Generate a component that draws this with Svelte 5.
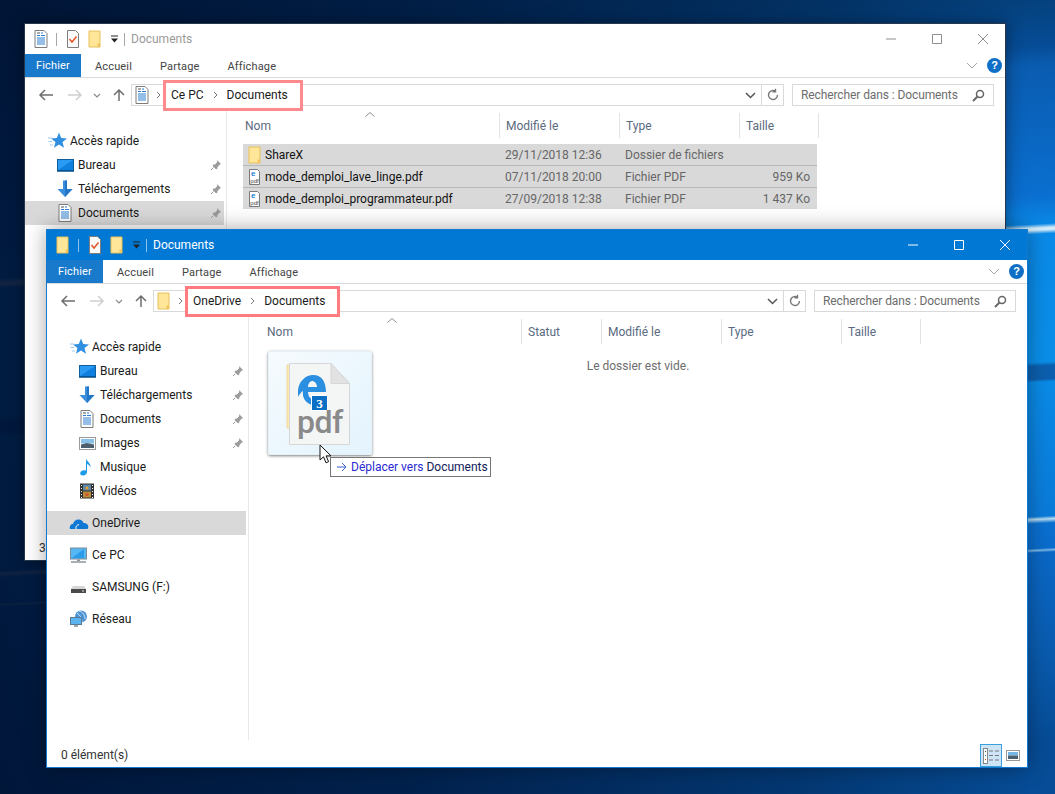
<script lang="ts">
  type NavItem = { label: string; icon: string; level: number; pin?: boolean; selected?: boolean; gap?: boolean };

  const quickAccess = (current: string): NavItem[] => [
    { label: 'Accès rapide', icon: 'star', level: 0 },
    { label: 'Bureau', icon: 'desktop', level: 1, pin: true },
    { label: 'Téléchargements', icon: 'download', level: 1, pin: true },
    { label: 'Documents', icon: 'doc', level: 1, pin: true, selected: current === 'Documents' }
  ];

  const backNav: NavItem[] = quickAccess('Documents');

  const frontNav: NavItem[] = [
    ...quickAccess(''),
    { label: 'Images', icon: 'images', level: 1, pin: true },
    { label: 'Musique', icon: 'music', level: 1 },
    { label: 'Vidéos', icon: 'video', level: 1 },
    { label: 'OneDrive', icon: 'cloud', level: 0, selected: true, gap: true },
    { label: 'Ce PC', icon: 'pc', level: 0, gap: true },
    { label: 'SAMSUNG (F:)', icon: 'drive', level: 0, gap: true },
    { label: 'Réseau', icon: 'network', level: 0, gap: true }
  ];

  const backCols = [
    { label: 'Nom', width: 261 },
    { label: 'Modifié le', width: 120 },
    { label: 'Type', width: 120 },
    { label: 'Taille', width: 79 }
  ];

  const frontCols = [
    { label: 'Nom', width: 261 },
    { label: 'Statut', width: 80 },
    { label: 'Modifié le', width: 120 },
    { label: 'Type', width: 120 },
    { label: 'Taille', width: 79 }
  ];

  const files = [
    { name: 'ShareX', icon: 'folder', date: '29/11/2018 12:36', type: 'Dossier de fichiers', size: '' },
    { name: 'mode_demploi_lave_linge.pdf', icon: 'pdf', date: '07/11/2018 20:00', type: 'Fichier PDF', size: '959 Ko' },
    { name: 'mode_demploi_programmateur.pdf', icon: 'pdf', date: '27/09/2018 12:38', type: 'Fichier PDF', size: '1 437 Ko' }
  ];
</script>

{#snippet icon(name: string)}
  <svg class="ico" width="20" height="20" viewBox="0 0 20 20">
    {#if name === 'folder'}
      <path d="M4 2h11v16H4z" fill="#ffe698" stroke="#e8c05a"/>
      <path d="M12.500 14.500H15V18h-2.500z" fill="#f2c55c"/>
    {:else if name === 'doc'}
      <path d="M4 1.500h9l3 3v14H4z" fill="#fff" stroke="#7d7d7d"/>
      <path d="M10 4h2M6 6.500h3M10 6.500h4M6 9h8M6 11h8M6 13h8M6 15h8" stroke="#2b7cd3" fill="none"/>
      <path d="M6 4h3" stroke="#555"/>
    {:else if name === 'check'}
      <path d="M4.500 1.500h8l3 3v14h-11z" fill="#fafafa" stroke="#7d7d7d"/>
      <path d="M6.500 10l2.500 3 4.500-5.500" stroke="#e2562a" stroke-width="1.500" fill="none"/>
    {:else if name === 'desktop'}
      <rect x="2.500" y="4.500" width="16" height="11" fill="#2b9af3" stroke="#0f5f9f"/>
      <path d="M3 15l15-10v10z" fill="#0f7fe0"/>
      <path d="M2 16h17" stroke="#06508e" stroke-width="1.500"/>
    {:else if name === 'download'}
      <path d="M8 1.500h4V10h5.500L10 18 2.500 10H8z" fill="#3a8fdc"/>
      <path d="M10 1.500h2V10h5.500L10 18z" fill="#2276c6"/>
    {:else if name === 'star'}
      <path d="M12 1.500l2.200 5.600 5.800.3-4.500 3.600 1.500 5.700-5-3.200-5 3.200 1.500-5.700L4 7.400l5.800-.3z" fill="#2f8fe0"/>
      <path d="M1 7h4M1.500 10.500h3.500M3 14h3" stroke="#9ccbf0"/>
    {:else if name === 'images'}
      <rect x="2.500" y="4.500" width="16" height="12" fill="#fff" stroke="#9a9a9a"/>
      <rect x="4" y="6" width="13" height="4.500" fill="#86bfe8"/>
      <path d="M4 11.500l6-1.500 7 1.500V15H4z" fill="#4c5d6c"/>
    {:else if name === 'music'}
      <path d="M9 1.500c.5 3 5 4 4.500 9-.6-2-2-3-3.500-3.500V15c0 2-2 3.500-4 3.500-1.800 0-2.800-1-2.800-2.300 0-1.800 2-3 4-3 .7 0 1.200.1 1.800.3z" fill="#1e9be8"/>
    {:else if name === 'video'}
      <rect x="3" y="2.500" width="14" height="15" fill="#333"/>
      <path d="M4 4h1v1H4zM4 7h1v1H4zM4 10h1v1H4zM4 13h1v1H4zM4 16h1v1H4zM15 4h1v1h-1zM15 7h1v1h-1zM15 10h1v1h-1zM15 13h1v1h-1zM15 16h1v1h-1z" fill="#eee"/>
      <rect x="6" y="3.500" width="8" height="6" fill="#5d88a8"/>
      <rect x="6" y="10.500" width="8" height="6" fill="#b98a3c"/>
      <circle cx="10" cy="7" r="1.600" fill="#e8a02a"/>
      <circle cx="10" cy="13.500" r="1.600" fill="#d2552a"/>
    {:else if name === 'cloud'}
      <path d="M1 16c-.8-3 1-5 3-5 .8-3.500 3.500-5 6.500-4.500 2 .4 3.500 1.800 4 3.500 2.800-.3 5 1.700 4.800 4.200-.1 1-.6 1.800-1.300 1.800z" fill="#0f78d4"/>
      <path d="M7 16c-.6-2.500 1-4.300 3-4.300" stroke="#fff" fill="none"/>
    {:else if name === 'pc'}
      <rect x="1.500" y="3" width="16" height="11" fill="#55b8f5" stroke="#7d8b95"/>
      <path d="M3 13L15 4v9z" fill="#2c9bea"/>
      <path d="M8 14.500h3v1.500H8z" fill="#8a949c"/>
      <path d="M2 17h15" stroke="#8a949c" stroke-width="1.500"/>
    {:else if name === 'drive'}
      <path d="M4 9h11l2 3H2z" fill="#d5d5d5"/>
      <rect x="2" y="12" width="15" height="4" fill="#4a4a4a"/>
      <path d="M13 14h2" stroke="#ddd"/>
    {:else if name === 'network'}
      <circle cx="12" cy="7.500" r="6" fill="#4d93d6"/>
      <path d="M8 4c3 2 5 5 5 9M10 2c4 1 6 4 6 8" stroke="#cfe5f6" fill="none"/>
      <rect x="1.500" y="8.500" width="11" height="7" fill="#5cb4ee" stroke="#5a7a94"/>
      <path d="M5 17h4" stroke="#7d8b95" stroke-width="1.500"/>
    {:else if name === 'pdf'}
      <path d="M4.500 2.500h8l2 2v13h-10z" fill="#fff" stroke="#7a7a7a"/>
      <text x="6" y="9" class="tiny-e">e</text>
      <text x="9.500" y="15.500" text-anchor="middle" class="tiny">pdf</text>
    {/if}
  </svg>
{/snippet}

{#snippet pin()}
  <svg class="pin" width="12" height="12" viewBox="0 0 12 12">
    <path d="M7 1l4 4-1.200.6-2.300 2.300-.4 2-1.100.3-3.300-3.300.3-1.100 2-.4 2.300-2.300z" fill="#9a9a9a"/>
    <path d="M3.500 8.500L1 11" stroke="#9a9a9a"/>
  </svg>
{/snippet}

{#snippet nav(items: NavItem[])}
  <nav class="sidebar">
    {#each items as item}
      <div class="nav-row" class:selected={item.selected} class:gap={item.gap} class:sub={item.level === 1}>
        {@render icon(item.icon)}
        <span class="nav-label">{item.label}</span>
        {#if item.pin}{@render pin()}{/if}
      </div>
    {/each}
  </nav>
{/snippet}

{#snippet header(cols: { label: string; width: number }[])}
  <div class="col-head">
    <svg class="sort" width="10" height="5" viewBox="0 0 10 5"><path d="M.5 4.500L5 .5l4.500 4" fill="none" stroke="#8a8a8a"/></svg>
    {#each cols as col}
      <div class="col" style="width: {col.width}px">{col.label}</div>
    {/each}
  </div>
{/snippet}

{#snippet chrome(active: boolean, qatFirst: string, crumbs: string[], addrIcon: string)}
  <header class="titlebar" class:active>
    <div class="qat">
      {@render icon(qatFirst)}
      <i class="qat-sep"></i>
      {@render icon('check')}
      {@render icon('folder')}
      <svg class="qat-drop" width="9" height="8" viewBox="0 0 9 8"><path d="M1 1h7" stroke="currentColor"/><path d="M1 3.500h7L4.500 7.500z" fill="currentColor"/></svg>
      <i class="qat-sep last"></i>
    </div>
    <span class="title">Documents</span>
    <div class="caption">
      <svg width="12" height="12" viewBox="0 0 12 12"><path d="M1 6h10" stroke="currentColor" fill="none"/></svg>
      <svg width="12" height="12" viewBox="0 0 12 12"><path d="M1.500 1.500h9v9h-9z" stroke="currentColor" fill="none"/></svg>
      <svg width="12" height="12" viewBox="0 0 12 12"><path d="M1 1l10 10M11 1L1 11" stroke="currentColor" fill="none"/></svg>
    </div>
  </header>

  <div class="tabs">
    <div class="tab file">Fichier</div>
    <div class="tab">Accueil</div>
    <div class="tab">Partage</div>
    <div class="tab">Affichage</div>
    <svg class="collapse" width="12" height="7" viewBox="0 0 12 7"><path d="M1 1l5 5 5-5" fill="none" stroke="#a8a8a8"/></svg>
    <div class="help">?</div>
  </div>

  <div class="addressbar">
    <svg class="arrow" width="16" height="14" viewBox="0 0 16 14"><path d="M15 7H2M7 2L2 7l5 5" fill="none" stroke="#6e6e6e" stroke-width="1.500"/></svg>
    <svg class="arrow fwd" width="16" height="14" viewBox="0 0 16 14"><path d="M1 7h13M9 2l5 5-5 5" fill="none" stroke="#cfcfcf" stroke-width="1.500"/></svg>
    <svg class="arrow small" width="8" height="5" viewBox="0 0 8 5"><path d="M1 1l3 3 3-3" fill="none" stroke="#8a8a8a" stroke-width="1.200"/></svg>
    <svg class="arrow up" width="14" height="14" viewBox="0 0 14 14"><path d="M7 13V2M2 7l5-5 5 5" fill="none" stroke="#6e6e6e" stroke-width="1.500"/></svg>
    <div class="address">
      {@render icon(addrIcon)}
      <svg class="crumb-sep first" width="5" height="8" viewBox="0 0 5 8"><path d="M1 1l3 3-3 3" fill="none" stroke="#7a7a7a"/></svg>
      <div class="crumbs">
        <span>{crumbs[0]}</span>
        <svg class="crumb-sep" width="5" height="8" viewBox="0 0 5 8"><path d="M1 1l3 3-3 3" fill="none" stroke="#7a7a7a"/></svg>
        <span>{crumbs[1]}</span>
      </div>
      <svg class="addr-drop" width="11" height="7" viewBox="0 0 11 7"><path d="M1 1l4.500 4.500L10 1" fill="none" stroke="#555" stroke-width="1.500"/></svg>
      <div class="refresh">
        <svg width="14" height="14" viewBox="0 0 14 14"><path d="M11.500 7a4.500 4.500 0 1 1-1.800-3.600M9.500 .8v3h-3" fill="none" stroke="#777" stroke-width="1.400"/></svg>
      </div>
    </div>
    <div class="search">
      <span>Rechercher dans : Documents</span>
      <svg width="13" height="13" viewBox="0 0 13 13"><circle cx="8" cy="5" r="3.500" fill="none" stroke="#666" stroke-width="1.500"/><path d="M5.500 7.500L1 12" stroke="#666" stroke-width="2"/></svg>
    </div>
  </div>
{/snippet}

<div class="desktop">
  <section class="window back">
    {@render chrome(false, 'doc', ['Ce PC', 'Documents'], 'doc')}
    <div class="body">
      {@render nav(backNav)}
      <div class="splitter"></div>
      <main class="main">
        {@render header(backCols)}
        <div class="files">
          {#each files as file}
            <div class="file-row">
              {@render icon(file.icon)}
              <span class="f-name">{file.name}</span>
              <span class="f-date">{file.date}</span>
              <span class="f-type">{file.type}</span>
              <span class="f-size">{file.size}</span>
            </div>
          {/each}
        </div>
      </main>
    </div>
    <footer class="status"><span>3 élément(s)</span></footer>
  </section>

  <section class="window front">
    {@render chrome(true, 'folder', ['OneDrive', 'Documents'], 'folder')}
    <div class="body">
      {@render nav(frontNav)}
      <div class="splitter"></div>
      <main class="main">
        {@render header(frontCols)}
        <p class="empty">Le dossier est vide.</p>

        <div class="drag-thumb">
          <svg width="90" height="92" viewBox="0 0 90 92">
            <path d="M12 8h6v63h-6z" fill="#fbe7b2" stroke="#eed9a0"/>
            <path d="M14.500 6.500h41.500l18.500 20v61h-60z" fill="#f4f5f5" stroke="#d6d6d6"/>
            <path d="M56 6.500v20h18.500z" fill="#e2e2e2" stroke="#d6d6d6"/>
            <path transform="translate(23 18)" fill-rule="evenodd" fill="#2a8fe0" d="M0 15C1 6 8 0 15 0c9 0 13 7 13 17H10c0 6 5 9 10 9 3 0 5-1 7-2v5c-4 2-9 2-13 1-7-2-10-8-9-14-2 1-4 4-5 6zM10 12h9c0-4-3-6-5-6s-4 3-4 6z"/>
            <rect x="36.500" y="38.500" width="16" height="15" fill="#0b6fc4" stroke="#fff"/>
            <text x="44.500" y="51" text-anchor="middle" class="badge-num">3</text>
            <text x="45" y="76" text-anchor="middle" class="pdf-word">pdf</text>
          </svg>
        </div>

        <div class="tooltip">
          <svg width="10" height="10" viewBox="0 0 10 10"><path d="M0 5h9M5 1l4 4-4 4" fill="none" stroke="#3a5fd0"/></svg>
          <span class="tip-verb">Déplacer vers</span>
          <span class="tip-target">Documents</span>
        </div>

        <svg class="cursor" width="14" height="20" viewBox="0 0 14 20">
          <path d="M1 1v15l3.500-3.200 2.500 6 2.600-1.100-2.500-5.800H12z" fill="#fff" stroke="#111"/>
        </svg>
      </main>
    </div>
    <footer class="status">
      <span>0 élément(s)</span>
      <div class="views">
        <div class="view on">
          <svg width="16" height="16" viewBox="0 0 16 16">
            <rect x=".5" y=".5" width="4" height="15" fill="#fff" stroke="#888"/>
            <path d="M2 3h1v1H2z" fill="#444"/><path d="M2 7h1v1H2z" fill="#2b7cd3"/><path d="M2 11h1v1H2z" fill="#d9541e"/>
            <path d="M6 3h4M12 3h4M6 7.500h4M12 7.500h4M6 12h4M12 12h4" stroke="#777"/>
          </svg>
        </div>
        <div class="view">
          <svg width="14" height="11" viewBox="0 0 14 11">
            <rect x=".5" y=".5" width="13" height="10" fill="#fff" stroke="#999"/>
            <rect x="2" y="2" width="10" height="3.500" fill="#76b5e8"/>
            <rect x="2" y="5.500" width="10" height="3.500" fill="#4c6070"/>
          </svg>
        </div>
      </div>
    </footer>
  </section>
</div>

<style>
  :global(body) {
    margin: 0;
    font-family: Roboto, "Liberation Sans", sans-serif;
    font-size: 12px;
  }

  .desktop {
    position: relative;
    width: 1055px;
    height: 794px;
    overflow: hidden;
    background:
      linear-gradient(90deg, rgba(0, 18, 50, .92) 0, rgba(0, 22, 58, .8) 400px, rgba(0, 30, 70, .45) 800px, rgba(0, 40, 90, 0) 1030px),
      linear-gradient(177deg,
        #03345f 0,
        #064c96 100px,
        #0a5cb0 120px,
        #0a6fd0 250px,
        #0a88e6 278px,
        #d4ecfa 282px,
        #d4ecfa 284px,
        #0a8ae8 288px,
        #0a8ee8 416px,
        #0c5fae 420px,
        #0c5fae 433px,
        #0a8ae6 436px,
        #0a7ad8 570px,
        #b8dcf2 573px,
        #0a70d0 577px,
        #0a6ccc 602px,
        #7db8e6 604px,
        #0a68c6 606px,
        #0a5cb0 700px,
        #064c96 794px);
  }

  .window {
    position: absolute;
    box-sizing: border-box;
    width: 982px;
    display: flex;
    flex-direction: column;
    background: #fff;
    color: #1a1a1a;
  }

  /* the two explorer windows sit on a free desktop */
  .back {
    left: 24px;
    top: 23px;
    height: 538px;
    border: 1px solid #27384c;
    box-shadow: 0 0 14px rgba(0, 0, 0, .4);
  }

  .front {
    left: 46px;
    top: 229px;
    height: 539px;
    border: 1px solid #1179cf;
    box-shadow: 0 0 20px rgba(0, 0, 0, .35);
  }

  .titlebar {
    height: 30px;
    flex: none;
    display: flex;
    align-items: center;
    color: #9a9a9a;
    background: #fff;
  }

  .titlebar.active {
    color: #fff;
    background: #0078d4;
  }

  .qat {
    display: flex;
    align-items: center;
    flex: none;
    padding-left: 6px;
    gap: 2px;
  }

  .qat-sep {
    flex: none;
    width: 1px;
    height: 13px;
    margin: 0 4px 0 3px;
    background: #a8a8a8;
  }

  .qat-sep.last {
    margin: 0 5px 0 3px;
  }

  .active .qat-sep {
    background: #8fc2ea;
  }

  .qat-drop {
    flex: none;
    color: #222;
    margin-left: 3px;
  }

  .title {
    flex: 1;
    font-size: 12px;
    padding-left: 1px;
  }

  .caption {
    display: flex;
    gap: 34px;
    padding-right: 16px;
    color: #8e8e8e;
  }

  .active .caption {
    color: #fff;
  }

  .tabs {
    height: 24px;
    flex: none;
    display: flex;
    align-items: center;
    box-sizing: border-box;
    border-bottom: 1px solid #dadbdc;
    color: #444;
    font-size: 11px;
    padding-right: 3px;
  }

  .tab {
    padding: 1px 14px 0;
    letter-spacing: .15px;
  }

  .tab.file {
    align-self: stretch;
    display: flex;
    align-items: center;
    width: 56px;
    box-sizing: border-box;
    padding: 0 0 0 11px;
    background: #1979ca;
    color: #fff;
  }

  .collapse {
    margin-left: auto;
    margin-right: 9px;
  }

  .help {
    width: 15px;
    height: 15px;
    border-radius: 50%;
    background: #0f6fc6;
    color: #fff;
    font: bold 11px/15px "Liberation Sans", sans-serif;
    text-align: center;
  }

  .addressbar {
    height: 22px;
    flex: none;
    margin-top: 6px;
    display: flex;
    align-items: center;
    padding-right: 11px;
  }

  .arrow {
    margin-left: 13px;
    flex: none;
  }

  .arrow.small {
    margin-left: 10px;
  }

  .arrow.up {
    margin-left: 11px;
  }

  .address {
    flex: 1;
    height: 22px;
    box-sizing: border-box;
    margin-left: 5px;
    border: 1px solid #d9d9d9;
    display: flex;
    align-items: center;
  }

  .crumb-sep {
    margin: 0 9px;
    flex: none;
  }

  .crumb-sep.first {
    margin: 0 2px 0 4px;
  }

  .crumbs {
    display: flex;
    align-items: center;
    height: 31px;
    margin: -6px 0;
    box-sizing: border-box;
    border: 3px solid #ff8a8e;
    padding: 0 12px 0 5px;
    color: #1a1a1a;
    background: #fff;
    position: relative;
  }

  .front .crumbs {
    border-color: #ff7b80;
  }

  .addr-drop {
    margin-left: auto;
    margin-right: 5px;
  }

  .refresh {
    width: 21px;
    align-self: stretch;
    display: flex;
    align-items: center;
    justify-content: center;
    border-left: 1px solid #d9d9d9;
  }

  .search {
    width: 202px;
    height: 22px;
    box-sizing: border-box;
    margin-left: 8px;
    border: 1px solid #d9d9d9;
    display: flex;
    align-items: center;
    justify-content: space-between;
    padding: 0 8px;
    color: #6d6d6d;
    letter-spacing: -.1px;
    flex: none;
  }

  .body {
    flex: 1;
    min-height: 0;
    display: flex;
    margin-top: 4px;
  }

  .sidebar {
    width: 199px;
    flex: none;
    padding-top: 19px;
  }

  .nav-row {
    height: 24px;
    display: flex;
    align-items: center;
    padding-left: 22px;
    color: #1a1a1a;
  }

  .nav-row.sub {
    padding-left: 30px;
  }

  .nav-row.gap {
    margin-top: 8px;
  }

  .nav-row.selected {
    background: #d9d9d9;
  }

  .nav-label {
    padding-left: 3px;
  }

  .ico {
    flex: none;
  }

  .pin {
    margin-left: auto;
    margin-right: 2px;
  }

  .splitter {
    width: 1px;
    margin-left: 2px;
    background: #e8e8e8;
  }

  .main {
    flex: 1;
    position: relative;
    min-width: 0;
  }

  .col-head {
    height: 25px;
    display: flex;
    position: relative;
    padding-left: 12px;
    margin-top: 3px;
  }

  .sort {
    position: absolute;
    left: 138px;
    top: -1px;
  }

  .col {
    box-sizing: border-box;
    padding-left: 6px;
    line-height: 26px;
    border-right: 1px solid #e3e3e3;
    color: #5a6a80;
  }

  .files {
    margin: 6px 0 0 16px;
    width: 574px;
  }

  .file-row {
    height: 21px;
    margin-bottom: 1px;
    background: #d9d9d9;
    display: flex;
    align-items: center;
    padding-left: 2px;
    box-sizing: border-box;
    box-shadow: 0 1px 0 #b8b8b8;
  }

  .file-row:last-child {
    box-shadow: none;
  }

  .f-name {
    width: 240px;
    flex: none;
    color: #111;
  }

  .f-date,
  .f-type {
    width: 120px;
    flex: none;
    color: #666;
  }

  .f-size {
    width: 65px;
    flex: none;
    text-align: right;
    color: #666;
  }

  .empty {
    margin: 0;
    text-align: center;
    padding-top: 15px;
    color: #6d6d6d;
  }

  /* drag image and drop hint float above the list */
  .drag-thumb {
    position: absolute;
    left: 19px;
    top: 35px;
    width: 104px;
    height: 104px;
    box-sizing: border-box;
    border: 1px solid #e3f1fa;
    border-radius: 2px;
    background: linear-gradient(135deg, #f6fbfe 0%, #e3f3fd 100%);
    box-shadow: 0 1px 3px rgba(0, 0, 0, .5);
    display: flex;
    align-items: center;
    justify-content: center;
  }

  .tooltip {
    position: absolute;
    left: 81px;
    top: 141px;
    width: 161px;
    height: 20px;
    box-sizing: border-box;
    border: 1px solid #767676;
    background: #fff;
    display: flex;
    align-items: center;
    padding-left: 6px;
    gap: 3px;
    white-space: nowrap;
  }

  .tip-verb {
    color: #2a2ad0;
    margin-left: 1px;
  }

  .tip-target {
    color: #10205a;
  }

  .cursor {
    position: absolute;
    left: 70px;
    top: 128px;
  }

  .status {
    height: 27px;
    flex: none;
    display: flex;
    align-items: center;
    justify-content: space-between;
    padding-left: 14px;
    color: #333;
  }

  .status > span {
    padding-top: 2px;
  }

  .views {
    display: flex;
    align-items: center;
    padding-right: 3px;
    height: 100%;
  }

  .view {
    width: 22px;
    height: 23px;
    display: flex;
    align-items: center;
    justify-content: center;
    box-sizing: border-box;
    align-self: flex-end;
  }

  .view.on {
    background: #cde4f7;
    border: 1px solid #3aa0dc;
  }

  .tiny {
    font: 6px "Liberation Sans", sans-serif;
    fill: #444;
  }

  .tiny-e {
    font: bold 8px "Liberation Sans", sans-serif;
    fill: #1e7fd6;
  }

  .badge-num {
    font: bold 13px "Liberation Serif", serif;
    fill: #fff;
  }

  .pdf-word {
    font: 500 32px Roboto, sans-serif;
    letter-spacing: -.5px;
    fill: #8a8a8a;
  }
</style>
